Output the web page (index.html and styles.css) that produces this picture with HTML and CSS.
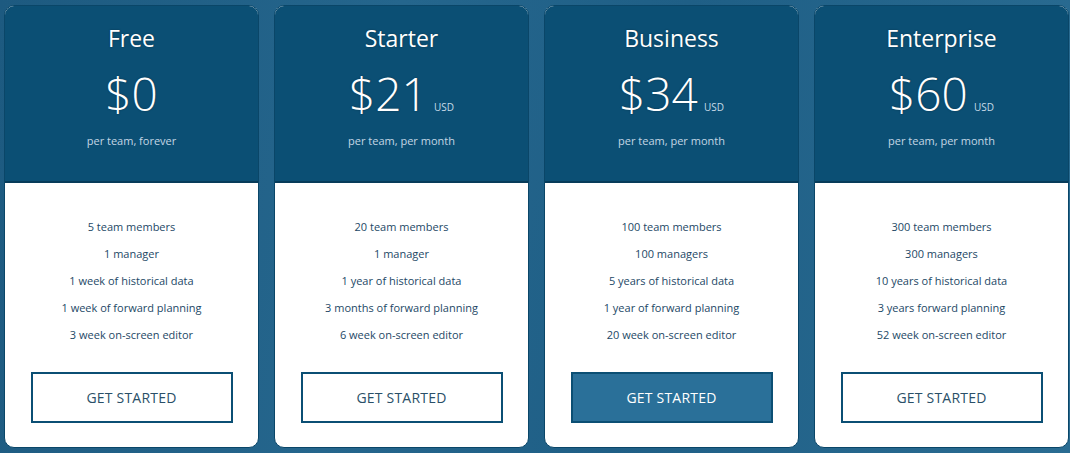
FILE: index.html
```html
<!DOCTYPE html>
<html>
<head>
<meta charset="utf-8">
<link rel="stylesheet" href="styles.css">
</head>
<body>
<div class="plans">
  <div class="card">
    <div class="head">
      <div class="name">Free</div>
      <div class="price"><span class="amount">$0</span></div>
      <div class="per">per team, forever</div>
    </div>
    <div class="body">
      <ul class="features">
        <li>5 team members</li>
        <li>1 manager</li>
        <li>1 week of historical data</li>
        <li>1 week of forward planning</li>
        <li>3 week on-screen editor</li>
      </ul>
      <a class="btn">GET STARTED</a>
    </div>
  </div>
  <div class="card">
    <div class="head">
      <div class="name">Starter</div>
      <div class="price"><span class="amount">$21</span><span class="cur">USD</span></div>
      <div class="per">per team, per month</div>
    </div>
    <div class="body">
      <ul class="features">
        <li>20 team members</li>
        <li>1 manager</li>
        <li>1 year of historical data</li>
        <li>3 months of forward planning</li>
        <li>6 week on-screen editor</li>
      </ul>
      <a class="btn">GET STARTED</a>
    </div>
  </div>
  <div class="card">
    <div class="head">
      <div class="name">Business</div>
      <div class="price"><span class="amount">$34</span><span class="cur">USD</span></div>
      <div class="per">per team, per month</div>
    </div>
    <div class="body">
      <ul class="features">
        <li>100 team members</li>
        <li>100 managers</li>
        <li>5 years of historical data</li>
        <li>1 year of forward planning</li>
        <li>20 week on-screen editor</li>
      </ul>
      <a class="btn btn-primary">GET STARTED</a>
    </div>
  </div>
  <div class="card">
    <div class="head">
      <div class="name">Enterprise</div>
      <div class="price"><span class="amount">$60</span><span class="cur">USD</span></div>
      <div class="per">per team, per month</div>
    </div>
    <div class="body">
      <ul class="features">
        <li>300 team members</li>
        <li>300 managers</li>
        <li>10 years of historical data</li>
        <li>3 years forward planning</li>
        <li>52 week on-screen editor</li>
      </ul>
      <a class="btn">GET STARTED</a>
    </div>
  </div>
</div>
</body>
</html>
```

FILE: styles.css
```css
html, body {
  margin: 0;
  padding: 0;
}
body {
  width: 1070px;
  height: 453px;
  overflow: hidden;
  font-family: "Open Sans", "Noto Sans", sans-serif;
  background: linear-gradient(100deg, #1d5a80 0%, #25668d 35%, #1f5f86 60%, #2a6c92 100%);
}
.plans {
  display: flex;
  gap: 15px;
  padding: 5px 0 0 4px;
}
.card {
  width: 255px;
  height: 443px;
  display: flex;
  flex-direction: column;
  border-radius: 10px;
  overflow: hidden;
  box-sizing: border-box;
  border: 1px solid #0a4668;
  background: #fff;
}
.head {
  height: 177px;
  background: #0b4f74;
  border-bottom: 2px solid #073c5a;
  color: #fff;
  text-align: center;
  padding-top: 17px;
  box-sizing: border-box;
  flex: none;
}
.name {
  font-size: 23px;
  line-height: 30px;
  font-weight: 400;
  text-shadow: 0 0 2px rgba(0, 0, 0, 0.35);
}
.price {
  margin-top: 12px;
  display: flex;
  justify-content: center;
  align-items: baseline;
  height: 56px;
}
.amount {
  font-size: 46px;
  line-height: 56px;
  font-weight: 300;
  text-shadow: 0 0 2px rgba(0, 0, 0, 0.35);
}
.cur {
  font-size: 10px;
  color: #c8dbe8;
  margin-left: 6px;
}
.per {
  margin-top: 12px;
  font-size: 11px;
  line-height: 16px;
  color: #c3d6e4;
}
.body {
  flex: 1;
  display: flex;
  flex-direction: column;
  align-items: center;
  padding: 30px 26px 0;
}
.features {
  list-style: none;
  margin: 0;
  padding: 0;
  text-align: center;
  font-size: 11px;
  line-height: 27px;
  color: #1d4866;
}
.btn {
  margin-top: 24px;
  width: 202px;
  height: 51px;
  box-sizing: border-box;
  border: 2px solid #0b4f74;
  display: flex;
  align-items: center;
  justify-content: center;
  font-size: 14px;
  color: #2a4f68;
  letter-spacing: 0.2px;
}
.btn-primary {
  background: #2a7099;
  color: #fff;
}
```
